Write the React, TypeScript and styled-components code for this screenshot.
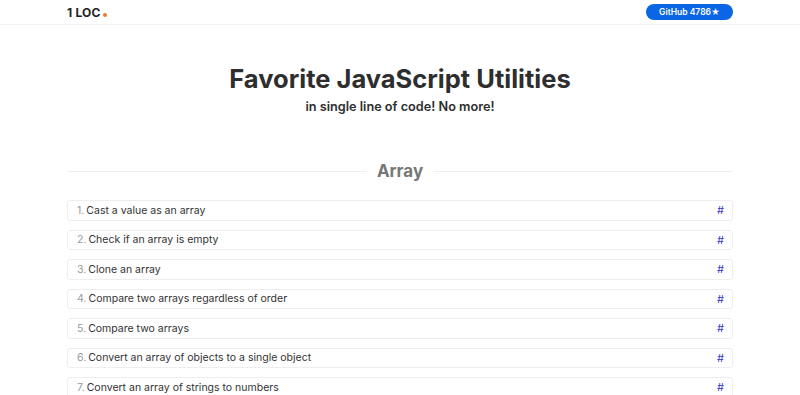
import React from "react";
import styled, { createGlobalStyle } from "styled-components";

const Global = createGlobalStyle`
  html, body { margin: 0; padding: 0; background: #fff; }
  body { font-family: Inter, "Noto Sans", sans-serif; color: #333; }
  * { box-sizing: border-box; }
`;

const Header = styled.header`
  height: 25px;
  border-bottom: 1px solid #f0f0f0;
`;

const Bar = styled.div`
  width: 666px;
  margin: 0 auto;
  height: 24px;
  display: flex;
  align-items: center;
  justify-content: space-between;
`;

const Logo = styled.a`
  font-size: 12px;
  font-weight: 700;
  color: #222;
  text-decoration: none;
  display: flex;
  align-items: baseline;
  letter-spacing: 0.2px;
`;

const Dot = styled.span`
  display: inline-block;
  width: 4px;
  height: 4px;
  border-radius: 50%;
  background: #f07a2a;
  margin-left: 2px;
`;

const GitHub = styled.a`
  height: 16px;
  width: 87px;
  border-radius: 8px;
  background: #0a66e4;
  color: #fff;
  font-size: 8.5px;
  font-weight: 600;
  display: flex;
  align-items: center;
  justify-content: center;
  text-decoration: none;
  margin-top: -1px;
`;

const Main = styled.main`
  width: 666px;
  margin: 0 auto;
`;

const Hero = styled.section`
  text-align: center;
  padding-top: 39px;
`;

const Title = styled.h1`
  margin: 0;
  font-size: 25.5px;
  font-weight: 700;
  line-height: 30px;
  color: #2e2e2e;
`;

const Subtitle = styled.h2`
  margin: 4px 0 0;
  font-size: 12.7px;
  font-weight: 600;
  line-height: 18px;
  color: #2e2e2e;
`;

const Section = styled.section`
  margin-top: 44px;
`;

const SectionTitle = styled.h3`
  display: flex;
  align-items: center;
  gap: 10px;
  margin: 0 0 18px;
  font-size: 17px;
  font-weight: 700;
  color: #777;
  line-height: 22px;
  &::before, &::after {
    content: "";
    flex: 1;
    height: 1px;
    background: #eee;
  }
`;

const List = styled.ol`
  list-style: none;
  margin: 0;
  padding: 0;
  display: flex;
  flex-direction: column;
  gap: 9px;
`;

const Row = styled.li`
  height: 20.5px;
  border: 1px solid #eee;
  border-radius: 3px;
  display: flex;
  align-items: center;
  justify-content: space-between;
  padding: 0 10px 0 9px;
  font-size: 10.5px;
  color: #333;
`;

const Num = styled.span`
  color: #999;
  margin-right: 2px;
`;

const Hash = styled.a`
  color: #3535d0;
  font-size: 11px;
  text-decoration: none;
  margin-right: -2px;
`;

const items = [
  "Cast a value as an array",
  "Check if an array is empty",
  "Clone an array",
  "Compare two arrays regardless of order",
  "Compare two arrays",
  "Convert an array of objects to a single object",
  "Convert an array of strings to numbers",
];

export default function App() {
  return (
    <>
      <Global />
      <Header>
        <Bar>
          <Logo href="#">1 LOC<Dot /></Logo>
          <GitHub href="#">GitHub 4786★</GitHub>
        </Bar>
      </Header>
      <Main>
        <Hero>
          <Title>Favorite JavaScript Utilities</Title>
          <Subtitle>in single line of code! No more!</Subtitle>
        </Hero>
        <Section>
          <SectionTitle>Array</SectionTitle>
          <List>
            {items.map((t, i) => (
              <Row key={t}>
                <span><Num>{i + 1}.</Num>{t}</span>
                <Hash href="#">#</Hash>
              </Row>
            ))}
          </List>
        </Section>
      </Main>
    </>
  );
}
